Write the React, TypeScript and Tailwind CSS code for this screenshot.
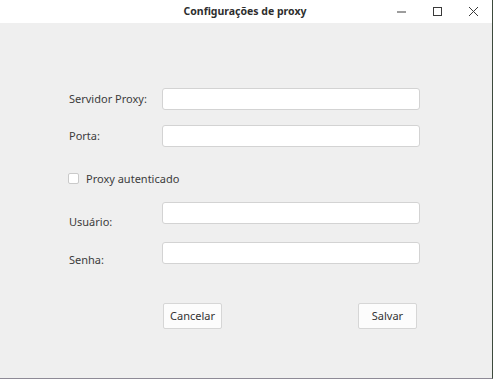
import React, { useState } from "react";

function WindowButtons() {
  return (
    <div className="flex items-center h-full text-[#3a3a3a]">
      <button className="w-9 h-full flex items-center justify-center">
        <svg width="11" height="11" viewBox="0 0 11 11">
          <path d="M1 6h9" stroke="currentColor" strokeWidth="1" />
        </svg>
      </button>
      <button className="w-9 h-full flex items-center justify-center">
        <svg width="11" height="11" viewBox="0 0 11 11">
          <rect x="1.5" y="1.5" width="8" height="8" fill="none" stroke="currentColor" strokeWidth="1" />
        </svg>
      </button>
      <button className="w-9 h-full flex items-center justify-center">
        <svg width="11" height="11" viewBox="0 0 11 11">
          <path d="M1 1l9 9M10 1l-9 9" stroke="currentColor" strokeWidth="1" />
        </svg>
      </button>
    </div>
  );
}

function App() {
  const [auth, setAuth] = useState(false);

  const input = "w-[258px] h-[22px] bg-white border border-[#d3d3d3] rounded-[3px] px-2 text-[11px] outline-none";
  const label = "w-[93px] text-[11px] leading-4 text-[#3c3c3c]";
  const button = "w-[59px] h-[26px] bg-[#fcfcfc] border border-[#d6d6d6] rounded-[2px] text-[11px] text-[#333]";

  return (
    <div
      className="w-[493px] h-[379px] flex flex-col bg-white border-r border-b border-r-[#3d4a3c] border-b-[#8e8a96]"
      style={{ fontFamily: '"Noto Sans", "Open Sans", sans-serif' }}
    >
      {/* title bar */}
      <div className="relative h-[23px] flex items-center justify-center bg-white">
        <span className="text-[10.5px] font-bold text-[#2e2e2e] ml-[-2px]">Configurações de proxy</span>
        <div className="absolute right-[1px] top-0 h-full">
          <WindowButtons />
        </div>
      </div>

      {/* body */}
      <div className="flex-1 bg-[#efefef] pl-[69px] pt-[65px] flex flex-col">
        <div className="flex items-center h-[22px]">
          <span className={label}>Servidor Proxy:</span>
          <input className={input} />
        </div>
        <div className="flex items-center h-[22px] mt-[15px]">
          <span className={label}>Porta:</span>
          <input className={input} />
        </div>

        <label className="flex items-center mt-[26px] h-[11px] cursor-pointer">
          <span
            className="w-[11px] h-[11px] bg-white border border-[#cacaca] rounded-[2px] ml-[-1px]"
            onClick={() => setAuth(!auth)}
          />
          <span className="ml-[7px] text-[11px] leading-4 text-[#3c3c3c]">Proxy autenticado</span>
        </label>

        <div className="flex items-start h-[22px] mt-[18px]">
          <span className={label + " pt-[12px]"}>Usuário:</span>
          <input className={input} />
        </div>
        <div className="flex items-start h-[22px] mt-[18px]">
          <span className={label + " pt-[10px]"}>Senha:</span>
          <input type="password" className={input} />
        </div>

        <div className="flex justify-between w-[254px] ml-[94px] mt-[39px]">
          <button className={button}>Cancelar</button>
          <button className={button}>Salvar</button>
        </div>
      </div>
    </div>
  );
}

export default App;
